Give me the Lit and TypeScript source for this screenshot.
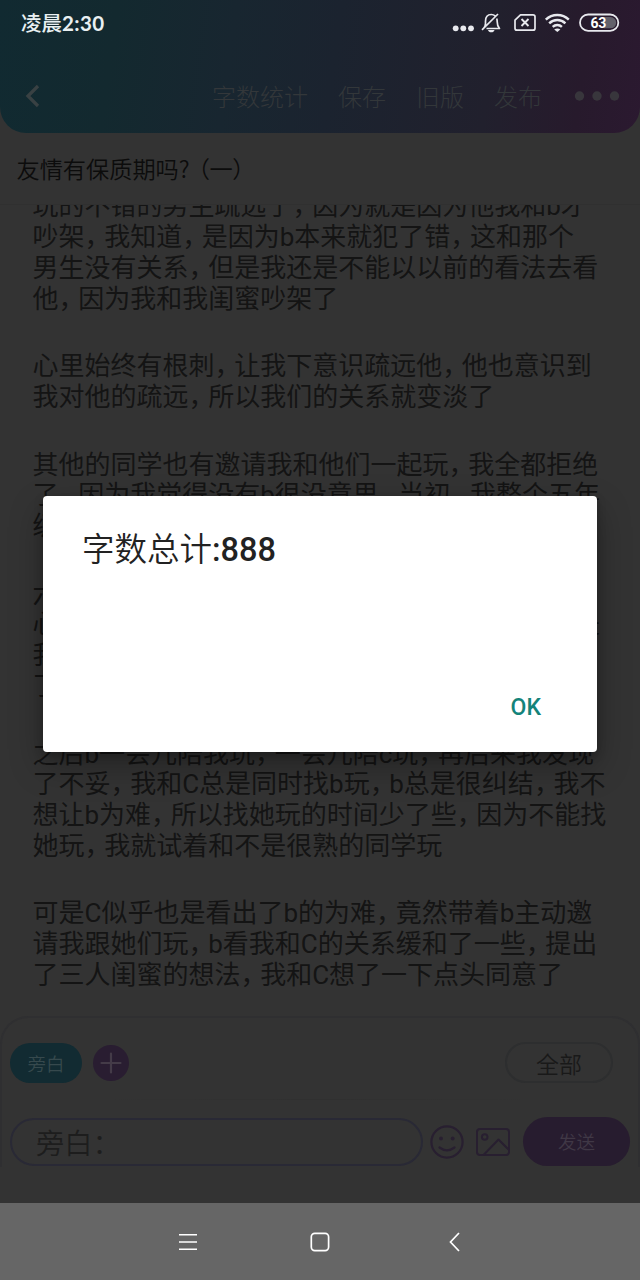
import { LitElement, html, css, svg } from "lit";
import { customElement } from "lit/decorators.js";

const paragraphs: string[][] = [
  ["玩的不错的男生疏远了，因为就是因为他我和b才", "吵架，我知道，是因为b本来就犯了错，这和那个", "男生没有关系，但是我还是不能以以前的看法去看", "他，因为我和我闺蜜吵架了"],
  ["心里始终有根刺，让我下意识疏远他，他也意识到", "我对他的疏远，所以我们的关系就变淡了"],
  ["其他的同学也有邀请我和他们一起玩，我全都拒绝", "了，因为我觉得没有b很没意思，当初，我整个五年", "级"],
  ["六", "心|是", "我", "了"],
  ["之后b一会儿陪我玩，一会儿陪c玩，再后来我发现", "了不妥，我和C总是同时找b玩，b总是很纠结，我不", "想让b为难，所以找她玩的时间少了些，因为不能找", "她玩，我就试着和不是很熟的同学玩"],
  ["可是C似乎也是看出了b的为难，竟然带着b主动邀", "请我跟她们玩，b看我和C的关系缓和了一些，提出", "了三人闺蜜的想法，我和C想了一下点头同意了"],
];

@customElement("story-line")
class StoryLine extends LitElement {
  static properties = { text: {} };
  declare text: string;
  static styles = css`
    :host { display: flex; justify-content: space-between; height: 30.8px; line-height: 30.8px; white-space: nowrap; }
    .comma { letter-spacing: -6.4px; }
  `;
  render() {
    return this.text.split("|").map(
      (part) => html`<span>${part.split(/(，)/).map((s) => (s === "，" ? html`<span class="comma">，</span>` : s))}</span>`
    );
  }
}

@customElement("status-icons")
class StatusIcons extends LitElement {
  static styles = css`
    :host { display: block; width: 170px; height: 24px; }
    svg { display: block; }
    .level { font: 700 14px Roboto, sans-serif; letter-spacing: -.3px; fill: #fff; stroke: none; }
  `;
  render() {
    return html`<svg width="170" height="24" viewBox="450 11 170 24" fill="none" stroke="#e8e9ee" stroke-width="1.7">
      ${svg`
      <g fill="#e8e9ee" stroke="none"><circle cx="455.7" cy="28.3" r="2.9"/><circle cx="463.3" cy="28.3" r="2.9"/><circle cx="471" cy="28.3" r="2.9"/></g>
      <path d="M483.5 28.5c1.300-1.600 2-2.700 2-5v-2.300c0-4 2.200-6.700 5.800-6.700 1.500 0 2.800.5 3.800 1.400M496.700 18.500c.4 1 .5 2 .5 3.200 0 3.500.6 5 2.300 6.800H486.500M482 29.800L498 14" stroke-linejoin="round"/>
      <path d="M488 30h6.500c-.4 1.500-1.600 2.300-3.200 2.300s-2.900-.8-3.300-2.300z" fill="#e8e9ee" stroke="none"/>
      <path d="M520.500 14.800h12.500q2 0 2 2v11.400q0 2-2 2h-16q-2 0-2-2v-8z" stroke-linejoin="round"/>
      <path d="M521.500 19l7 7m0-7l-7 7" stroke-width="1.900"/>
      <g stroke-width="2.400"><path d="M545.800 19.600a16.500 16.500 0 0 1 23 0"/><path d="M549.200 23.300a11.500 11.500 0 0 1 16.200 0"/><path d="M552.700 26.900a6.600 6.600 0 0 1 9.200 0"/></g>
      <path d="M554.200 29.400q3.100-2 6.200 0l-3.100 2.600z" fill="#e8e9ee" stroke="none"/>
      <rect x="580" y="14.500" width="38.300" height="16.300" rx="8.150" stroke-width="1.800"/>
      <path d="M604 17h6.500a5.600 5.600 0 0 1 0 11.300H604z" fill="#63616b" stroke="none"/>
      <text class="level" x="590.500" y="27.800">63</text>`}
    </svg>`;
  }
}

@customElement("app-root")
class AppRoot extends LitElement {
  static styles = css`
    :host { display: flex; flex-direction: column; position: relative; width: 640px; height: 1280px; overflow: hidden;
      background: #333; color: #141414; font-family: Roboto, "Noto Sans CJK SC", sans-serif; }
    * { box-sizing: border-box; }
    svg { display: block; flex: none; }
    .header { height: 133px; border-radius: 0 0 26px 26px; flex: none;
      background: linear-gradient(98deg, #112a31 0%, #13292f 18%, #182630 36%, #1b232f 52%, #21202d 76%, #271a2c 90%, #2b1930 100%); }
    .status { display: flex; justify-content: space-between; height: 60px; padding: 11px 20px 0 21px; }
    .clock { font: 500 20.5px/24px Lato, "Noto Sans CJK SC", sans-serif; color: #e9f0f2; }
    .clock .digits { font-weight: 700; letter-spacing: .4px; }
    .toolbar { display: flex; align-items: center; height: 71px; padding: 0 20px 0 24px; color: #33373a; font-size: 24px; font-weight: 300; }
    .actions { display: flex; gap: 30px; margin-left: auto; margin-right: 32px; }
    .title { flex: none; height: 72px; padding: 0 16.500px; font-size: 23.2px; line-height: 70px; font-weight: 350; color: #0c0c0c; border-bottom: 1px solid #303030; font-family: "Noto Sans CJK SC", sans-serif; }
    .paren { letter-spacing: -.4px; margin-left: -3px; }
    .story { flex: none; height: 811px; overflow: hidden; display: flex; flex-direction: column; justify-content: flex-end; gap: 36.7px;
      padding: 0 40px 25.200px 32.500px; font-size: 26px; font-weight: 400; }
    .para { flex: none; }
    .composer { flex: none; height: 151px; padding: 24px 9px 0; border: 2px solid #2f2f31; border-bottom: 0; border-radius: 28px 28px 0 0; }
    .row { display: flex; align-items: center; }
    .pill { display: grid; place-items: center; border-radius: 30px; font-weight: 350; }
    .role { width: 72px; height: 40px; background: #122b32; color: #36494d; font-size: 18.500px; margin-left: -1px; }
    .plus { margin-left: 11px; }
    .all { width: 108px; height: 41px; border: 2px solid #2d2e2f; font-size: 23px; color: #191919; margin-left: auto; margin-right: 16px; }
    .divider { height: 1px; margin: 16px 80px 17px; background: linear-gradient(90deg, #333, #303030, #333); }
    .entry { flex: none; display: flex; align-items: center; width: 413px; height: 48px; margin-left: -1px; padding: 0 0 1px 24px; border: 2px solid #292935; border-radius: 24px;
      font: 350 28.300px "Noto Sans CJK SC", sans-serif; color: #1d1d1d; }
    .smile { margin-left: 7px; }
    .image { margin-left: 12px; }
    .send { flex: none; width: 107px; height: 49px; margin-left: 13px; background: #271c2f; color: #403846; font-size: 18.500px; padding-bottom: 1px; }
    .nav { flex: none; margin-top: auto; height: 77px; background: #666; display: flex; align-items: center; padding-left: 179px; }
    .home { margin: 0 119px 0 113px; }
    .dialog { position: absolute; left: 43px; top: 496px; width: 554px; height: 255.500px; border-radius: 4px; background: #fff;
      box-shadow: 0 14px 34px rgba(0,0,0,.3), 0 3px 8px rgba(0,0,0,.25); padding: 34.800px 56px 28px 39px; display: flex; flex-direction: column; justify-content: space-between; }
    .total { font-size: 32.500px; line-height: 38px; font-weight: 350; color: #222; white-space: nowrap; }
    .total b { font-weight: 500; }
    .ok { align-self: flex-end; font-size: 23px; line-height: 32px; font-weight: 500; color: #14837a; }
  `;

  render() {
    return html`
      <div class="header">
        <div class="status"><span class="clock">凌晨<span class="digits">2:30</span></span><status-icons></status-icons></div>
        <div class="toolbar">
          <svg width="18" height="24" viewBox="0 0 18 24" fill="none" stroke="#394143" stroke-width="3.300"><path d="M14 2L4 12l10 10"/></svg>
          <div class="actions"><span>字数统计</span><span>保存</span><span>旧版</span><span>发布</span></div>
          <svg width="46" height="10" viewBox="0 0 46 10" fill="#38363c"><circle cx="5.500" cy="5" r="4.700"/><circle cx="23" cy="5" r="4.700"/><circle cx="40.500" cy="5" r="4.700"/></svg>
        </div>
      </div>
      <div class="title">友情有保质期吗?<span class="paren">（一）</span></div>
      <div class="story">
        ${paragraphs.map((p) => html`<div class="para">${p.map((l) => html`<story-line .text=${l}></story-line>`)}</div>`)}
      </div>
      <div class="composer">
        <div class="row">
          <div class="pill role">旁白</div>
          <svg class="plus" width="36" height="36" viewBox="0 0 36 36"><circle cx="18" cy="18" r="18" fill="#291d31"/><path d="M18 8.500v19M8.500 18h19" stroke="#443b48" stroke-width="2.200" stroke-linecap="round"/></svg>
          <div class="pill all">全部</div>
        </div>
        <div class="divider"></div>
        <div class="row">
          <div class="entry">旁白：</div>
          <svg class="smile" width="34" height="34" viewBox="0 0 34 34" fill="none" stroke="#281f30" stroke-width="2.200" stroke-linecap="round"><circle cx="17" cy="17" r="15.600"/><path d="M9.500 22.500q7.500 5.600 15 0"/><circle cx="11" cy="13.500" r="1.900" fill="#281f30" stroke="none"/><circle cx="22.700" cy="13.500" r="1.900" fill="#281f30" stroke="none"/></svg>
          <svg class="image" width="34" height="28" viewBox="0 0 34 28" fill="none" stroke="#281f30" stroke-width="2"><rect x="1" y="1" width="32" height="26" rx="3"/><circle cx="8.700" cy="9" r="2.800"/><path d="M7.500 27L22.500 11.500 33 22" stroke-linejoin="round"/></svg>
          <div class="pill send">发送</div>
        </div>
      </div>
      <div class="nav">
        <svg width="18" height="18" viewBox="0 0 18 18" stroke="#fff" stroke-width="1.600"><path d="M0 1.800h18M0 9h18M0 16.200h18"/></svg>
        <svg class="home" width="20" height="20" viewBox="0 0 20 20" fill="none" stroke="#fff" stroke-width="1.700"><rect x="1.300" y="1.300" width="17.300" height="17.300" rx="3.500"/></svg>
        <svg width="11" height="20" viewBox="0 0 11 20" fill="none" stroke="#fff" stroke-width="1.700"><path d="M10 1L1.500 10l8.500 9"/></svg>
      </div>
      <div class="dialog">
        <div class="total">字数总计<b>:888</b></div>
        <div class="ok">OK</div>
      </div>
    `;
  }
}
